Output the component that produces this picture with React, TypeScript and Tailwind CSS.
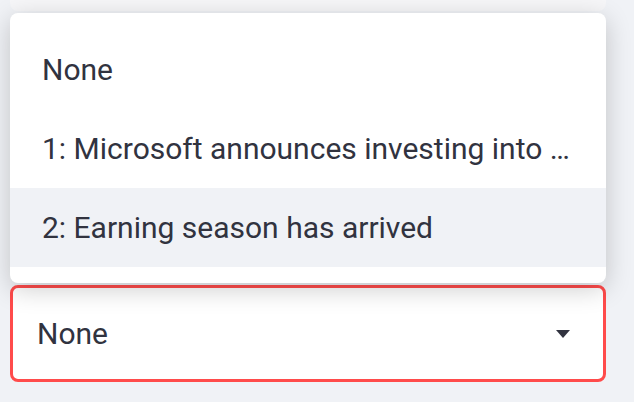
const options = [
  '1: Microsoft announces investing into …',
  '2: Earning season has arrived',
];

function Caret() {
  return (
    <svg width="14" height="8" viewBox="0 0 14 8" className="shrink-0">
      <path d="M0 0 L14 0 L7 8 Z" fill="#31333f" />
    </svg>
  );
}

export default function App() {
  return (
    <div
      className="h-[402px] w-[634px] overflow-hidden bg-[#f0f2f6] px-[10px] text-[#31333f]"
      style={{ fontFamily: 'Roboto, "Noto Sans", sans-serif' }}
    >
      {/* box peeking above the menu */}
      <div className="h-[11px] w-[596px] rounded-b-[8px] bg-[#f6f6f8]" />

      {/* open dropdown list */}
      <div className="relative z-10 mt-[2px] w-[596px] rounded-[8px] bg-white py-[16px] shadow-[0_6px_26px_rgba(0,0,0,0.2)]">
        <div className="flex h-[80px] items-center pl-[32px] text-[30px]">None</div>
        {options.map((o, i) => (
          <div
            key={o}
            className={
              'flex h-[79px] items-center whitespace-nowrap pl-[32px] text-[30px] ' +
              (i === 1 ? 'bg-[#f0f2f6]' : '')
            }
          >
            {o}
          </div>
        ))}
      </div>

      {/* select box */}
      <div className="mt-[2px] flex h-[97px] w-[596px] items-center justify-between rounded-[8px] border-[3px] border-[#ff4b4b] bg-white pl-[24px] pr-[33px]">
        <span className="text-[30px]">None</span>
        <Caret />
      </div>
    </div>
  );
}
